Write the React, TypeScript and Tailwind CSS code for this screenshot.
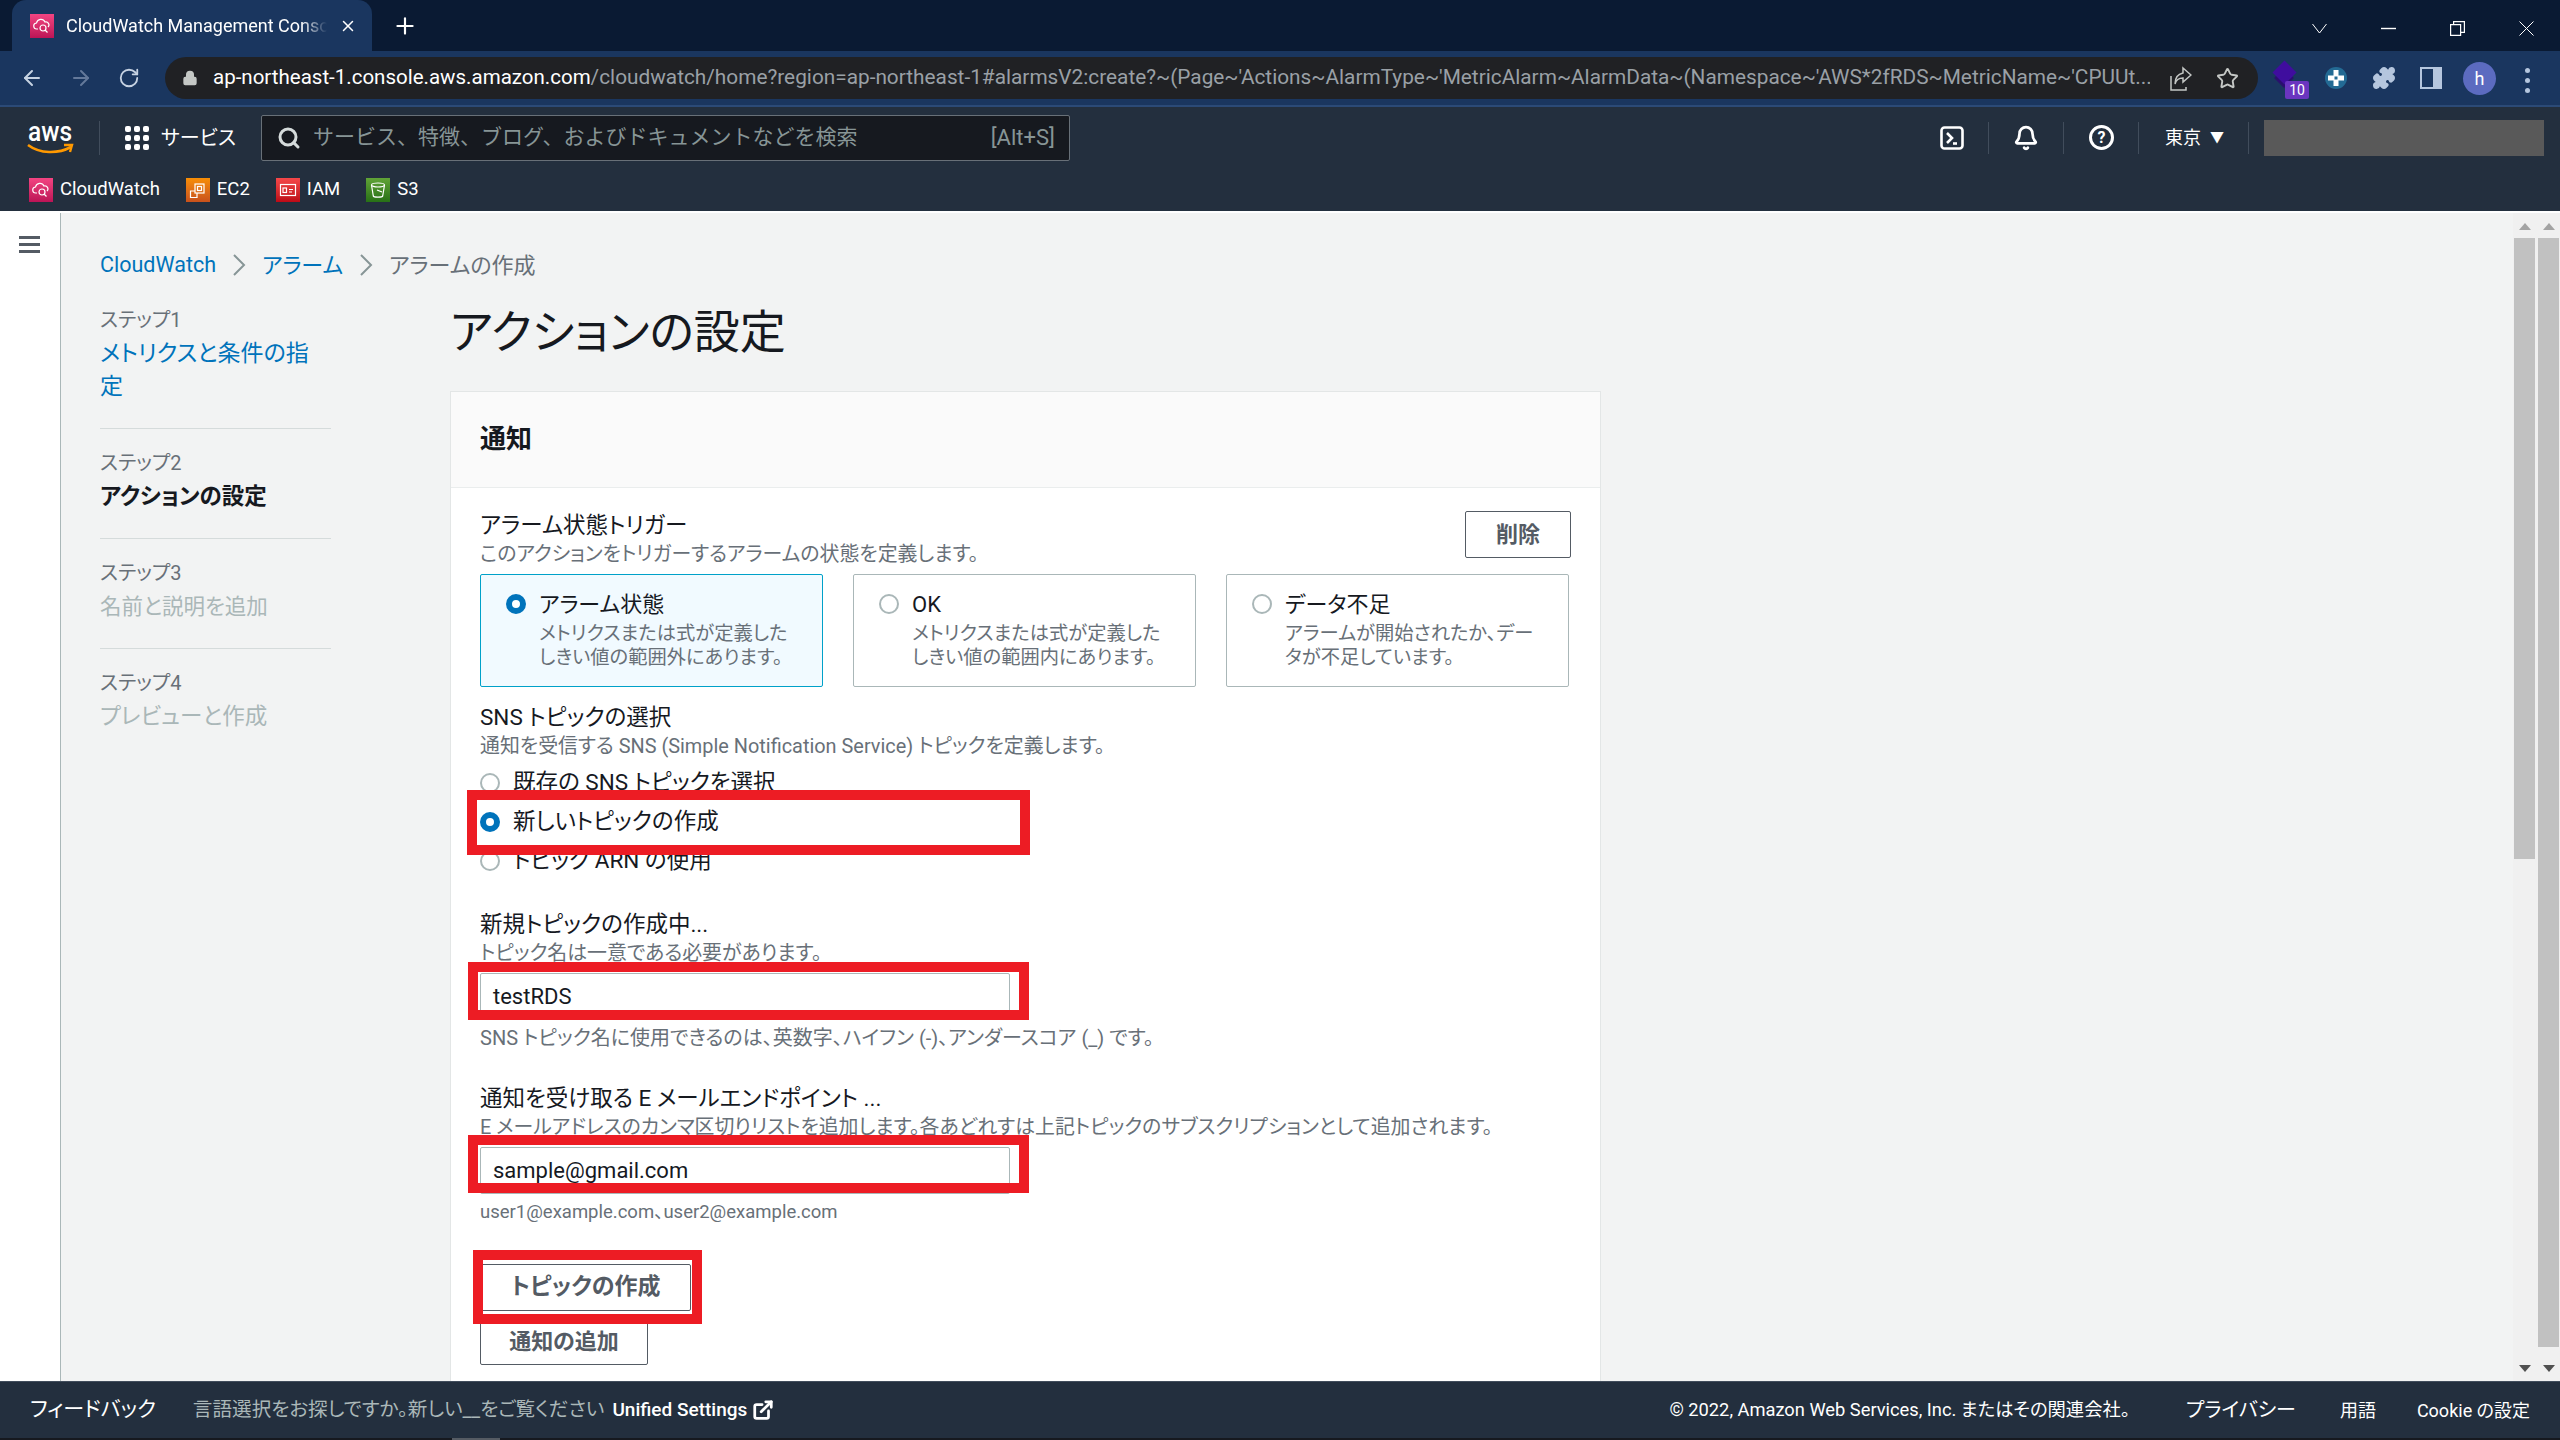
import { Search, Star, Puzzle, RotateCw, ArrowLeft, ArrowRight, Lock, Plus, X, Bell, ExternalLink } from 'lucide-react';

const font = "font-['Roboto','Noto_Sans_CJK_JP',sans-serif] [font-feature-settings:'palt']";

const Favicon = ({ color }: { color: string }) => (
  <span className={`flex h-[24px] w-[24px] shrink-0 items-center justify-center ${color}`}>
    <svg width="18" height="18" viewBox="0 0 18 18" fill="none" stroke="white" strokeWidth="1.2">
      <path d="M5 12H4a3 3 0 0 1-.5-6A4.5 4.5 0 0 1 12 5a3 3 0 0 1 3 5" />
      <circle cx="10" cy="11" r="3" />
      <path d="M12 13l2.5 2.5" />
    </svg>
  </span>
);

const Shortcut = ({ label, color, icon }: { label: string; color: string; icon: React.ReactNode }) => (
  <div className="flex items-center gap-[7px]">
    <span className={`flex h-[24px] w-[24px] items-center justify-center ${color}`}>{icon}</span>
    <span className="text-[18.5px] text-white">{label}</span>
  </div>
);

const Step = ({ step, label, tone, lines }: { step: string; label: string; tone: string; lines?: string }) => (
  <div className="border-b border-[#d5dbdb] pb-[25px] pt-[17px] last:border-b-0">
    <div className="flex h-[34px] items-center text-[20px] text-[#687078]">{step}</div>
    <div className={`leading-[33px] ${tone}`}>
      {label}
      {lines && <br />}
      {lines}
    </div>
  </div>
);

const Radio = ({ on }: { on?: boolean }) =>
  on ? (
    <span className="h-[20px] w-[20px] shrink-0 rounded-full border-[6px] border-[#0073bb] bg-white" />
  ) : (
    <span className="h-[20px] w-[20px] shrink-0 rounded-full border-2 border-[#aab7b8] bg-white" />
  );

const Tile = ({ title, lines, on }: { title: string; lines: string[]; on?: boolean }) => (
  <div className={`h-[113px] w-[343px] rounded-[2px] border pl-[25px] pt-[16px] ${on ? 'border-[#00a1c9] bg-[#f1faff]' : 'border-[#aab7b8] bg-white'}`}>
    <div className="flex h-[26px] items-center gap-[13px]">
      <Radio on={on} />
      <span className="text-[22px] text-[#16191f]">{title}</span>
    </div>
    <div className="ml-[33px] mt-[5px] text-[19.3px] leading-[24px] text-[#687078]">
      {lines.map((l) => (
        <div key={l}>{l}</div>
      ))}
    </div>
  </div>
);

const Option = ({ label, on }: { label: string; on?: boolean }) => (
  <div className="flex h-[39px] items-center gap-[13px]">
    <Radio on={on} />
    <span className="text-[22.5px] text-[#16191f]">{label}</span>
  </div>
);

const Field = ({ value }: { value: string }) => (
  <div className="flex h-[47px] w-[530px] items-center rounded-[2px] border border-[#aab7b8] bg-white pl-[12px] text-[22px] text-[#16191f]">
    {value}
  </div>
);

const Mark = ({ className }: { className: string }) => (
  <div className={`pointer-events-none absolute border-[10px] border-[#ed1c24] ${className}`} />
);

const Crumb = () => (
  <svg width="14" height="22" viewBox="0 0 14 22" fill="none" stroke="#879596" strokeWidth="2" className="mx-[16px]">
    <path d="M2 1l10 10L2 21" />
  </svg>
);

const Divider = () => <span className="block h-[32px] w-px bg-[#414d5c]" />;

const Label = ({ children }: { children: React.ReactNode }) => (
  <div className="flex h-[30px] items-center text-[22.5px] text-[#16191f]">{children}</div>
);

const Desc = ({ children }: { children: React.ReactNode }) => (
  <div className="flex h-[28px] items-center whitespace-nowrap text-[19.9px] text-[#687078]">{children}</div>
);

export default function App() {
  return (
    <div className={`relative flex h-[1440px] w-[2560px] flex-col overflow-hidden bg-[#f2f3f3] ${font}`}>
      {/* browser tabs */}
      <div className="flex h-[51px] items-end bg-[#0a1a33] pl-[12px]">
        <div className="flex h-[51px] w-[360px] items-center rounded-t-[14px] bg-[#1a365f] pl-[18px]">
          <Favicon color="bg-gradient-to-b from-[#f34482] to-[#bc1356]" />
          <span className="ml-[12px] w-[261px] overflow-hidden whitespace-nowrap text-[18px] text-white [mask-image:linear-gradient(to_right,black_90%,transparent)]">CloudWatch Management Console</span>
          <X size={18} className="ml-[12px] text-white" />
        </div>
        <Plus size={26} className="mb-[12px] ml-[20px] text-white" />
        <div className="mb-[15px] ml-auto flex items-center gap-[54px] pr-[26px]">
          <svg width="15" height="15" viewBox="0 0 15 15" fill="none" stroke="white" strokeWidth="1">
            <path d="M0.5 3l7 9 7-9" />
          </svg>
          <svg width="15" height="15" viewBox="0 0 15 15" fill="none" stroke="white" strokeWidth="1.4">
            <path d="M0 7.5h15" />
          </svg>
          <svg width="15" height="15" viewBox="0 0 15 15" fill="none" stroke="white" strokeWidth="1.2">
            <path d="M0.6 3.6h10v10.8H0.6z" />
            <path d="M3.6 3.6V0.6h10.8v10.8h-3.8" />
          </svg>
          <svg width="15" height="15" viewBox="0 0 15 15" fill="none" stroke="white" strokeWidth="1">
            <path d="M0.5 0.5l14 14M14.5 0.5l-14 14" />
          </svg>
        </div>
      </div>

      {/* browser toolbar */}
      <div className="flex h-[56px] items-start border-b-2 border-[#2b4a77] bg-[#1a365f] pl-[20px] pt-[6px]">
        <div className="flex h-[42px] items-center gap-[25px] text-[#c6d2e2]">
          <ArrowLeft size={24} />
          <ArrowRight size={24} className="text-[#64799a]" />
          <RotateCw size={22} />
        </div>
        <div className="ml-[25px] flex h-[42px] w-[2093px] items-center rounded-full bg-[#202124] pl-[17px]">
          <Lock size={16} className="text-[#c4c7c5]" fill="#c4c7c5" />
          <span className="ml-[15px] w-[1937px] overflow-hidden whitespace-nowrap">
            <span className="text-[20.5px] text-white">ap-northeast-1.console.aws.amazon.com</span>
            <span className="text-[20.8px] text-[#9aa0a6]">/cloudwatch/home?region=ap-northeast-1#alarmsV2:create?~(Page~'Actions~AlarmType~'MetricAlarm~AlarmData~(Namespace~'AWS*2fRDS~MetricName~'CPUUt...</span>
          </span>
          <svg width="22" height="28" viewBox="0 0 22 28" fill="none" stroke="#c4c7c5" strokeWidth="1.5" className="ml-[20px]">
            <path d="M1 12v14h15v-3" />
            <path d="M13 4l8 7-8 7v-4c-4 0-7 2-8 6 0-6 3-10 8-11z" />
          </svg>
          <Star size={23} className="ml-[24px] text-[#c4c7c5]" />
        </div>
        <div className="relative ml-[16px] h-[42px] w-[34px]">
          <span className="absolute left-[3px] top-[14px] h-[14px] w-[14px] rotate-45 bg-[#2a0f6e]" />
          <span className="absolute left-[2px] top-[7px] h-[17px] w-[17px] rotate-45 bg-[#3f0d9e]" />
          <span className="absolute left-[11px] top-[24px] flex h-[18px] w-[24px] items-center justify-center rounded-[2px] bg-[#6b35c0] text-[14px] text-white">10</span>
        </div>
        <span className="ml-[17px] mt-[10px] flex h-[22px] w-[22px] items-center justify-center rounded-full bg-[#236a94]">
          <svg width="16" height="16" viewBox="0 0 16 16">
            <path d="M5.5 0h5v5.5H16v5h-5.5V16h-5v-5.5H0v-5h5.5z" fill="white" />
            <rect x="6.5" y="6.5" width="3" height="3" fill="#236a94" />
          </svg>
        </span>
        <Puzzle size={24} className="ml-[25px] mt-[9px] text-[#b5c6de]" fill="#b5c6de" />
        <span className="ml-[24px] mt-[10px] flex h-[22px] w-[22px] justify-end border-2 border-[#b5c6de] bg-[#1a365f]">
          <span className="h-full w-[7px] bg-[#b5c6de]" />
        </span>
        <span className="ml-[21px] mt-[5px] flex h-[33px] w-[33px] items-center justify-center rounded-full bg-[#5c6bc0] text-[18px] text-white">h</span>
        <span className="ml-[29px] mt-[11px] flex flex-col gap-[5px]">
          <span className="h-[5px] w-[5px] rounded-full bg-[#b5c6de]" />
          <span className="h-[5px] w-[5px] rounded-full bg-[#b5c6de]" />
          <span className="h-[5px] w-[5px] rounded-full bg-[#b5c6de]" />
        </span>
      </div>

      {/* aws console nav */}
      <div className="h-[104px] bg-[#232f3e]">
        <div className="flex h-[61px] items-center pl-[27px]">
          <svg width="47" height="34" viewBox="0 0 47 34" className="overflow-visible">
            <text x="1" y="20" fontSize="27" fontWeight="500" fill="#fff" fontFamily="Roboto" textLength="44" lengthAdjust="spacingAndGlyphs">aws</text>
            <path d="M1 24c12 9 30 9 43 2" fill="none" stroke="#f90" strokeWidth="2.6" />
            <path d="M37 24h8l-2 7" fill="none" stroke="#f90" strokeWidth="2.4" />
          </svg>
          <span className="ml-[25px] h-[34px] w-px bg-[#414d5c]" />
          <div className="ml-[25px] grid h-[24px] w-[24px] grid-cols-3 gap-[3px]">
            {Array.from({ length: 9 }).map((_, i) => (
              <span key={i} className="rounded-[2px] bg-white" />
            ))}
          </div>
          <span className="ml-[12px] text-[20px] text-white">サービス</span>
          <div className="ml-[25px] flex h-[46px] w-[809px] items-center rounded-[2px] border border-[#687078] bg-[#16191f] pl-[15px] pr-[14px]">
            <Search size={24} strokeWidth={3} className="text-[#d5dbdb]" />
            <span className="ml-[12px] text-[21px] text-[#879596] [font-feature-settings:normal]">サービス、特徴、ブログ、およびドキュメントなどを検索</span>
            <span className="ml-auto text-[22px] text-[#879596]">[Alt+S]</span>
          </div>
          <div className="ml-auto flex items-center pr-[16px]">
            <svg width="24" height="24" viewBox="0 0 24 24" fill="none" stroke="white" strokeWidth="2.6">
              <rect x="1.5" y="1.5" width="21" height="21" rx="3" />
              <path d="M7 7l5 5-5 5" />
              <path d="M13 17.5h4" />
            </svg>
            <span className="ml-[24px]"><Divider /></span>
            <Bell size={26} strokeWidth={2.5} className="ml-[24px] text-white" />
            <span className="ml-[24px]"><Divider /></span>
            <span className="ml-[25px] flex h-[25px] w-[25px] items-center justify-center rounded-full border-[3px] border-white text-[16px] font-bold leading-none text-white">?</span>
            <span className="ml-[24px]"><Divider /></span>
            <span className="ml-[26px] text-[18px] text-white">東京</span>
            <span className="ml-[9px] text-[14px] text-white">▼</span>
            <span className="ml-[24px]"><Divider /></span>
            <span className="ml-[15px] h-[36px] w-[280px] bg-[#595959]" />
          </div>
        </div>
        <div className="flex h-[41px] items-center gap-[26px] pl-[29px] pt-[2px]">
          <Shortcut label="CloudWatch" color="bg-gradient-to-b from-[#f34482] to-[#bc1356]" icon={<Favicon color="" />} />
          <Shortcut
            label="EC2"
            color="bg-gradient-to-b from-[#f78e04] to-[#c8511b]"
            icon={
              <svg width="18" height="18" viewBox="0 0 18 18" fill="none" stroke="white" strokeWidth="1.2">
                <path d="M6 10H1.500v6.500H8V12" />
                <rect x="6" y="3" width="9" height="9" />
                <rect x="8.500" y="5.500" width="4" height="4" />
              </svg>
            }
          />
          <Shortcut
            label="IAM"
            color="bg-gradient-to-b from-[#f54749] to-[#bd0816]"
            icon={
              <svg width="18" height="18" viewBox="0 0 18 18" fill="none" stroke="white" strokeWidth="1.2">
                <rect x="1.500" y="3.500" width="15" height="11" />
                <rect x="4" y="7" width="3.500" height="4.500" />
                <path d="M10 8.500h4M10 11h3" />
              </svg>
            }
          />
          <Shortcut
            label="S3"
            color="bg-gradient-to-b from-[#60a337] to-[#277116]"
            icon={
              <svg width="18" height="18" viewBox="0 0 18 18" fill="none" stroke="white" strokeWidth="1.2">
                <ellipse cx="9" cy="4" rx="6.500" ry="2" />
                <path d="M2.500 4l1.800 11c.3 1.400 9.100 1.400 9.400 0L15.500 4" />
                <path d="M8 9l5 2" />
              </svg>
            }
          />
        </div>
      </div>
      <div className="h-[2px] bg-white" />

      {/* page */}
      <div className="relative flex min-h-0 flex-1 overflow-hidden">
        <div className="w-[61px] shrink-0 border-r border-[#aab7b8] bg-white pl-[19px] pt-[23px]">
          <div className="flex w-[21px] flex-col gap-[4px]">
            <span className="h-[3px] bg-[#545b64]" />
            <span className="h-[3px] bg-[#545b64]" />
            <span className="h-[3px] bg-[#545b64]" />
          </div>
        </div>
        <div className="flex-1 pl-[39px]">
          <div className="mt-[32px] flex h-[40px] items-center text-[22px]">
            <span className="text-[21.5px] text-[#0073bb]">CloudWatch</span>
            <Crumb />
            <span className="text-[#0073bb]">アラーム</span>
            <Crumb />
            <span className="text-[#687078]">アラームの作成</span>
          </div>
          <div className="mt-[1px] flex">
            <div className="w-[231px] shrink-0">
              <Step step="ステップ1" label="メトリクスと条件の指" lines="定" tone="text-[23px] text-[#0073bb]" />
              <Step step="ステップ2" label="アクションの設定" tone="text-[22.5px] font-bold text-[#16191f]" />
              <Step step="ステップ3" label="名前と説明を追加" tone="text-[21.5px] text-[#aab7b8]" />
              <Step step="ステップ4" label="プレビューと作成" tone="text-[22.5px] text-[#aab7b8]" />
            </div>
            <div className="ml-[119px] mt-[16px] w-[1151px]">
              <h1 className="flex h-[60px] items-center text-[46px] font-normal text-[#16191f]">アクションの設定</h1>
              <div className="mt-[29px] border border-[#e3e6e6] bg-white pb-[100px]">
                <div className="flex h-[96px] items-center border-b border-[#eaeded] bg-[#fafafa] pl-[29px] text-[26px] font-bold text-[#16191f]">通知</div>
                <div className="px-[29px] pt-[23px]">
                  <div className="flex items-start justify-between">
                    <div>
                      <Label>アラーム状態トリガー</Label>
                      <div className="flex h-[27px] items-center text-[19.9px] text-[#687078]">このアクションをトリガーするアラームの状態を定義します。</div>
                    </div>
                    <button className="h-[47px] w-[106px] rounded-[2px] border border-[#545b64] bg-white text-[22px] font-bold text-[#545b64]">削除</button>
                  </div>
                  <div className="mt-[6px] flex gap-[30px]">
                    <Tile on title="アラーム状態" lines={['メトリクスまたは式が定義した', 'しきい値の範囲外にあります。']} />
                    <Tile title="OK" lines={['メトリクスまたは式が定義した', 'しきい値の範囲内にあります。']} />
                    <Tile title="データ不足" lines={['アラームが開始されたか、デー', 'タが不足しています。']} />
                  </div>
                  <div className="mt-[16px]"><Label>SNS トピックの選択</Label></div>
                  <Desc>通知を受信する SNS (Simple Notification Service) トピックを定義します。</Desc>
                  <div className="mt-[2px]">
                    <Option label="既存の SNS トピックを選択" />
                    <Option on label="新しいトピックの作成" />
                    <Option label="トピック ARN の使用" />
                  </div>
                  <div className="mt-[30px]"><Label>新規トピックの作成中...</Label></div>
                  <Desc>トピック名は一意である必要があります。</Desc>
                  <div className="mt-[5px]"><Field value="testRDS" /></div>
                  <div className="mt-[6px] flex h-[24px] items-center text-[20px] text-[#687078]">SNS トピック名に使用できるのは、英数字、ハイフン (-)、アンダースコア (_) です。</div>
                  <div className="mt-[34px]"><Label>通知を受け取る E メールエンドポイント ...</Label></div>
                  <Desc>E メールアドレスのカンマ区切りリストを追加します。各あどれすは上記トピックのサブスクリプションとして追加されます。</Desc>
                  <div className="mt-[5px]"><Field value="sample@gmail.com" /></div>
                  <div className="mt-[7px] flex h-[24px] items-center text-[18.5px] text-[#687078]">user1@example.com、user2@example.com</div>
                  <button className="mt-[39px] block h-[47px] w-[211px] rounded-[2px] border border-[#545b64] bg-white text-[23px] font-bold text-[#545b64]">トピックの作成</button>
                  <button className="mt-[7px] block h-[47px] w-[168px] rounded-[2px] border border-[#545b64] bg-white text-[22px] font-bold text-[#545b64]">通知の追加</button>
                </div>
              </div>
            </div>
          </div>
        </div>

        {/* double scrollbars */}
        <div className="absolute right-0 top-0 flex h-full gap-[3px] bg-[#f0f0f0] pl-[1px] pr-[1px]">
          <div className="flex w-[21px] flex-col items-center">
            <span className="mt-[10px] h-0 w-0 border-x-[6px] border-b-[7px] border-x-transparent border-b-[#a3a3a3]" />
            <span className="mt-[8px] h-[621px] w-full bg-[#c1c1c1]" />
            <span className="mb-[9px] mt-auto h-0 w-0 border-x-[6px] border-t-[7px] border-x-transparent border-t-[#505050]" />
          </div>
          <div className="flex w-[21px] flex-col items-center">
            <span className="mt-[10px] h-0 w-0 border-x-[6px] border-b-[7px] border-x-transparent border-b-[#a3a3a3]" />
            <span className="mt-[8px] h-[1109px] w-full bg-[#c1c1c1]" />
            <span className="mb-[9px] mt-auto h-0 w-0 border-x-[6px] border-t-[7px] border-x-transparent border-t-[#505050]" />
          </div>
        </div>
      </div>

      {/* console footer */}
      <div className="flex h-[57px] items-center border-t border-[#414d5c] bg-[#232f3e] px-[30px]">
        <span className="text-[21px] text-white">フィードバック</span>
        <span className="ml-[37px] text-[19.6px] text-[#aab7b8]">言語選択をお探しですか。新しい__をご覧ください</span>
        <span className="ml-[8px] text-[19px] font-medium text-white">Unified Settings</span>
        <ExternalLink size={22} strokeWidth={3} className="ml-[5px] text-white" />
        <span className="ml-auto text-[18.3px] text-white">© 2022, Amazon Web Services, Inc. またはその関連会社。</span>
        <span className="ml-[56px] text-[20px] text-white">プライバシー</span>
        <span className="ml-[44px] text-[18px] text-white">用語</span>
        <span className="ml-[41px] text-[18px] text-white">Cookie の設定</span>
      </div>
      <div className="h-[2px] bg-[#16191f] pl-[452px]">
        <div className="h-full w-[48px] bg-[#555b63]" />
      </div>

      {/* red annotations */}
      <Mark className="left-[467px] top-[790px] h-[65px] w-[563px]" />
      <Mark className="left-[468px] top-[962px] h-[58px] w-[561px]" />
      <Mark className="left-[468px] top-[1135px] h-[58px] w-[561px]" />
      <Mark className="left-[473px] top-[1250px] h-[74px] w-[229px]" />
    </div>
  );
}
